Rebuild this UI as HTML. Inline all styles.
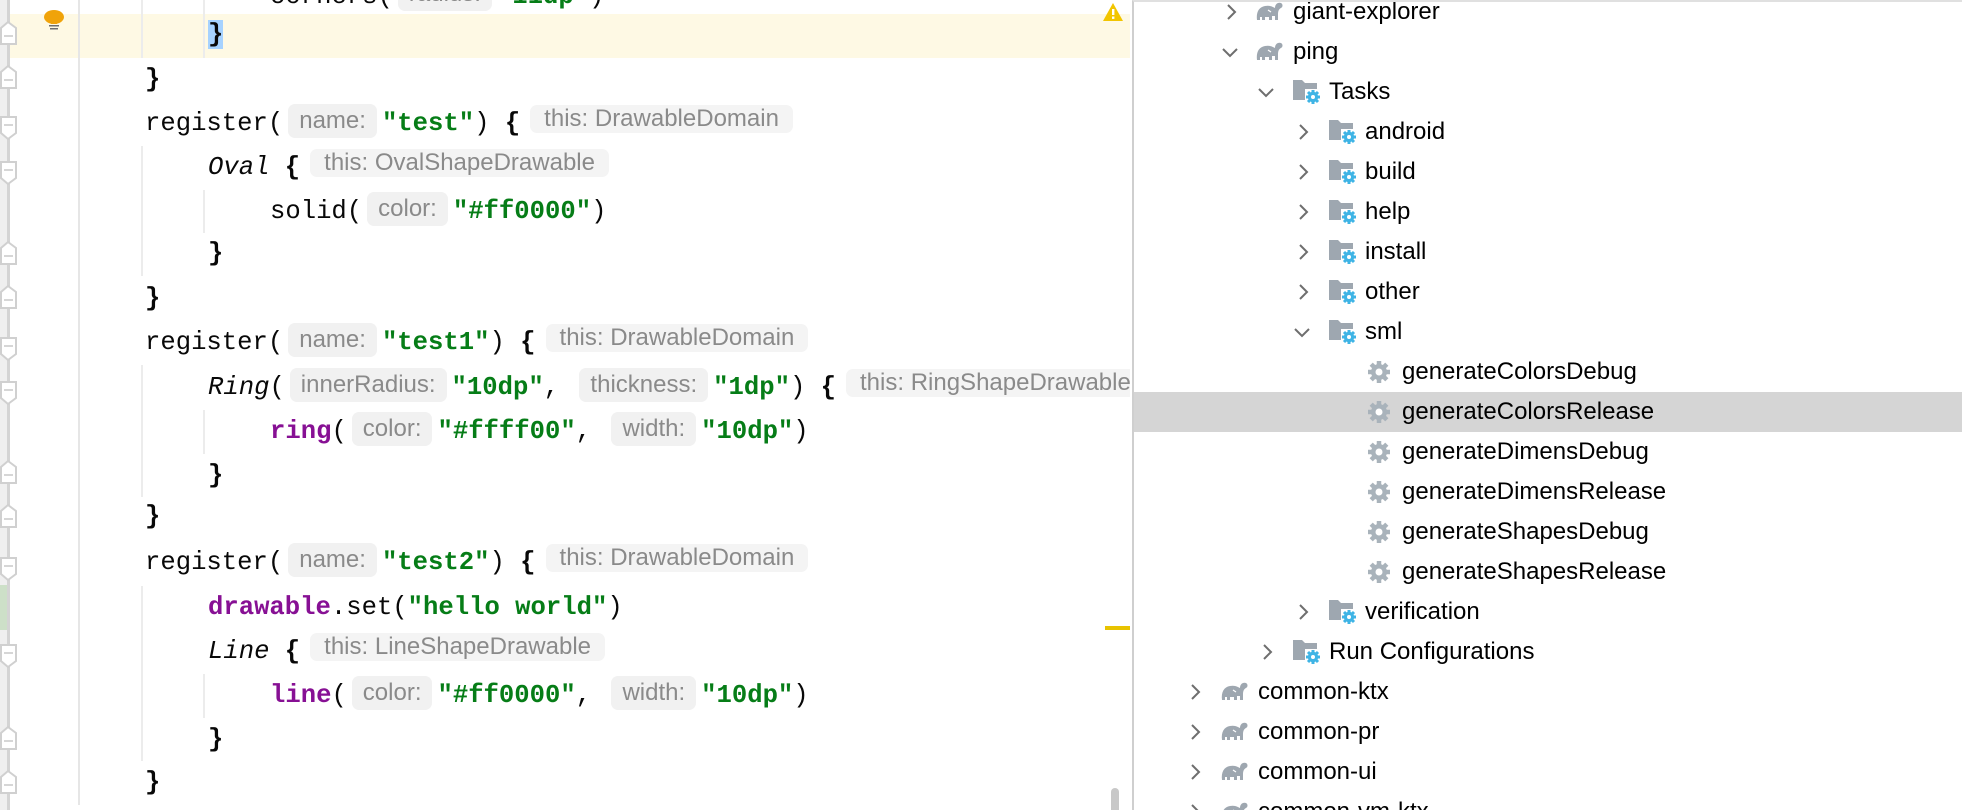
<!DOCTYPE html>
<html><head><meta charset="utf-8"><style>
*{margin:0;padding:0;box-sizing:border-box}
body{width:1962px;height:810px;overflow:hidden;background:#fff;position:relative;font-family:"Liberation Sans",sans-serif}
#ed{position:absolute;left:0;top:0;width:1130px;height:810px;overflow:hidden;background:#fff}
.ln{position:absolute;height:44px;line-height:44px;font-family:"Liberation Mono",monospace;font-size:25.6px;color:#080808;white-space:pre}
.s{color:#067d17;font-weight:bold}
.k{color:#871094;font-weight:bold}
.i{font-style:italic}
.b{font-weight:bold}
.h{display:inline-block;font-family:"Liberation Sans",sans-serif;font-size:24px;color:#8a8a8a;background:#f1f1f1;border-radius:7px;padding:0 11px;line-height:34px;margin:0 5px;vertical-align:2px}
.t{display:inline-block;font-family:"Liberation Sans",sans-serif;font-size:24px;color:#8a8a8a;background:#f4f4f4;border-radius:7px;padding:0 14px;line-height:28px;margin:0 10px;vertical-align:4px}
.ig{position:absolute;width:2px;background:#ececec}
#tree{position:absolute;left:1132px;top:0;width:830px;height:810px;border-left:2px solid #cfcfcf;border-top:2px solid #e0e0e0;background:#fff;overflow:hidden}
.r{position:absolute;left:0;width:830px;height:40px}
.r span{position:absolute;top:0;line-height:40px;font-size:24px;color:#000;white-space:nowrap}
.r svg{position:absolute}
</style></head><body>
<div id="ed">
<div style="position:absolute;left:0;top:14px;width:1130px;height:44px;background:#fef9e4"></div>
<div style="position:absolute;left:0;top:0;width:8px;height:810px;background:#efefef"></div>
<div style="position:absolute;left:0;top:585px;width:8px;height:45px;background:#cde0c8"></div>
<div style="position:absolute;left:7px;top:0;width:3px;height:810px;background:#d4d4d4"></div>
<div style="position:absolute;left:78px;top:0;width:2px;height:805px;background:#e6e6e6"></div>
<svg style="position:absolute;left:43px;top:10px" width="22" height="20" viewBox="0 0 22 20"><ellipse cx="11" cy="7" rx="10" ry="7" fill="#f0a30a"/><path d="M5 10 Q8 13 8 14 H14 Q14 13 17 10Z" fill="#f0a30a"/><rect x="6" y="15" width="10" height="1.5" fill="#6e6e6e"/><rect x="7" y="18" width="8" height="1.5" fill="#6e6e6e"/></svg>
<svg style="position:absolute;left:0;top:0" width="20" height="810">
<g fill="#fff" stroke="#d0d0d0" stroke-width="2">
<path d="M1 28 L8 22 L16 28 V44 H1Z"/><path d="M1 72 L8 66 L16 72 V88 H1Z"/>
<path d="M1 117 H16 V133 L8 139 L1 133Z"/><path d="M1 162 H16 V178 L8 184 L1 178Z"/>
<path d="M1 248 L8 242 L16 248 V264 H1Z"/><path d="M1 292 L8 286 L16 292 V308 H1Z"/>
<path d="M1 338 H16 V354 L8 360 L1 354Z"/><path d="M1 382 H16 V398 L8 404 L1 398Z"/>
<path d="M1 467 L8 461 L16 467 V483 H1Z"/><path d="M1 511 L8 505 L16 511 V527 H1Z"/>
<path d="M1 558 H16 V574 L8 580 L1 574Z"/><path d="M1 645 H16 V661 L8 667 L1 661Z"/>
<path d="M1 733 L8 727 L16 733 V749 H1Z"/><path d="M1 777 L8 771 L16 777 V793 H1Z"/>
</g>
<g stroke="#c8c8c8" stroke-width="1.5">
<path d="M4 36H13M4 80H13M4 125H13M4 170H13M4 256H13M4 300H13M4 346H13M4 390H13M4 475H13M4 519H13M4 566H13M4 653H13M4 741H13M4 785H13"/>
</g></svg>
<div class="ig" style="left:141px;top:0;height:58px"></div>
<div class="ig" style="left:203px;top:0;height:58px"></div>
<div class="ig" style="left:141px;top:146px;height:130px"></div>
<div class="ig" style="left:203px;top:190px;height:43px"></div>
<div class="ig" style="left:141px;top:365px;height:132px"></div>
<div class="ig" style="left:203px;top:410px;height:44px"></div>
<div class="ig" style="left:141px;top:586px;height:175px"></div>
<div class="ig" style="left:203px;top:674px;height:44px"></div>

<div class="ln" style="left:270px;top:-25px">corners(<span class="h">radius:</span><span class="s">"11dp"</span>)</div>
<div class="ln" style="left:208px;top:13px"><span style="background:#a6d2ff" class="b">}</span></div>
<div class="ln" style="left:145px;top:58px"><span class="b">}</span></div>
<div class="ln" style="left:145px;top:102px">register(<span class="h">name:</span><span class="s">"test"</span>) <span class="b">{</span><span class="t">this: DrawableDomain</span></div>
<div class="ln" style="left:208px;top:146px"><span class="i">Oval</span> <span class="b">{</span><span class="t">this: OvalShapeDrawable</span></div>
<div class="ln" style="left:270px;top:190px">solid(<span class="h">color:</span><span class="s">"#ff0000"</span>)</div>
<div class="ln" style="left:208px;top:232px"><span class="b">}</span></div>
<div class="ln" style="left:145px;top:277px"><span class="b">}</span></div>
<div class="ln" style="left:145px;top:321px">register(<span class="h">name:</span><span class="s">"test1"</span>) <span class="b">{</span><span class="t">this: DrawableDomain</span></div>
<div class="ln" style="left:208px;top:366px"><span class="i">Ring</span>(<span class="h">innerRadius:</span><span class="s">"10dp"</span>, <span class="h">thickness:</span><span class="s">"1dp"</span>) <span class="b">{</span><span class="t">this: RingShapeDrawable</span></div>
<div class="ln" style="left:270px;top:410px"><span class="k">ring</span>(<span class="h">color:</span><span class="s">"#ffff00"</span>, <span class="h">width:</span><span class="s">"10dp"</span>)</div>
<div class="ln" style="left:208px;top:454px"><span class="b">}</span></div>
<div class="ln" style="left:145px;top:495px"><span class="b">}</span></div>
<div class="ln" style="left:145px;top:541px">register(<span class="h">name:</span><span class="s">"test2"</span>) <span class="b">{</span><span class="t">this: DrawableDomain</span></div>
<div class="ln" style="left:208px;top:586px"><span class="k">drawable</span>.set(<span class="s">"hello world"</span>)</div>
<div class="ln" style="left:208px;top:630px"><span class="i">Line</span> <span class="b">{</span><span class="t">this: LineShapeDrawable</span></div>
<div class="ln" style="left:270px;top:674px"><span class="k">line</span>(<span class="h">color:</span><span class="s">"#ff0000"</span>, <span class="h">width:</span><span class="s">"10dp"</span>)</div>
<div class="ln" style="left:208px;top:718px"><span class="b">}</span></div>
<div class="ln" style="left:145px;top:761px"><span class="b">}</span></div>
<svg style="position:absolute;left:1102px;top:2px" width="22" height="20" viewBox="0 0 22 20"><path d="M11 1 L21 19 H1Z" fill="#f2c500"/><rect x="10" y="7" width="2.4" height="6" fill="#fff"/><rect x="10" y="14.5" width="2.4" height="2.4" fill="#fff"/></svg>
<div style="position:absolute;left:1105px;top:626px;width:25px;height:4px;background:#e8c300"></div>
<div style="position:absolute;left:1111px;top:788px;width:8px;height:30px;border-radius:4px;background:#c8c8c8"></div>
</div>

<svg width="0" height="0" style="position:absolute">
<defs>
<g id="chr"><path d="M2 1 L9 8 L2 15" fill="none" stroke="#6e6e6e" stroke-width="2"/></g>
<g id="chd"><path d="M1 3 L8 10 L15 3" fill="none" stroke="#6e6e6e" stroke-width="2"/></g>
<g id="ele"><path d="M2 20 C1 12 4 7 10 6 C15 5 18 7 20 8 C20 4 23 2 26 3 C28 4 28 7 26 8 C24 9 23 11 23 14 V20 H20 V16 H17 V20 H14 V17 H10 V20 H7 V17 H5 V20Z" fill="#9ea7b0"/><path d="M13 10 L16 12" stroke="#fff" stroke-width="1.2"/></g>
<g id="gearb"><circle cx="7" cy="7" r="5.2" fill="#3fb4e5"/><g stroke="#3fb4e5" stroke-width="3"><path d="M7 0V14M0 7H14M2 2L12 12M12 2L2 12"/></g><circle cx="7" cy="7" r="2" fill="#fff"/></g>
<g id="fold"><path d="M0 0 H9 L12 3 H24 V20 H0Z" fill="#9ea7b0"/><rect x="12" y="9" width="16" height="16" fill="#fff"/><use href="#gearb" x="13" y="10"/></g>
<g id="gear"><circle cx="11" cy="11" r="8" fill="#a9b3bb"/><g stroke="#a9b3bb" stroke-width="4.5"><path d="M11 0V22M0 11H22M3.2 3.2L18.8 18.8M18.8 3.2L3.2 18.8"/></g><circle cx="11" cy="11" r="3.5" fill="#fff"/></g>
</defs></svg>

<div id="tree">
<div class="r" style="top:-10px"><svg style="left:92px;top:12px" width="12" height="16"><use href="#chr"/></svg><svg style="left:121px;top:8px" width="30" height="22"><use href="#ele"/></svg><span style="left:159px">giant-explorer</span></div>
<div class="r" style="top:30px"><svg style="left:88px;top:14px" width="17" height="12"><use href="#chd"/></svg><svg style="left:121px;top:8px" width="30" height="22"><use href="#ele"/></svg><span style="left:159px">ping</span></div>
<div class="r" style="top:70px"><svg style="left:124px;top:14px" width="17" height="12"><use href="#chd"/></svg><svg style="left:159px;top:8px" width="30" height="28"><use href="#fold"/></svg><span style="left:195px">Tasks</span></div>
<div class="r" style="top:110px"><svg style="left:164px;top:12px" width="12" height="16"><use href="#chr"/></svg><svg style="left:195px;top:8px" width="30" height="28"><use href="#fold"/></svg><span style="left:231px">android</span></div>
<div class="r" style="top:150px"><svg style="left:164px;top:12px" width="12" height="16"><use href="#chr"/></svg><svg style="left:195px;top:8px" width="30" height="28"><use href="#fold"/></svg><span style="left:231px">build</span></div>
<div class="r" style="top:190px"><svg style="left:164px;top:12px" width="12" height="16"><use href="#chr"/></svg><svg style="left:195px;top:8px" width="30" height="28"><use href="#fold"/></svg><span style="left:231px">help</span></div>
<div class="r" style="top:230px"><svg style="left:164px;top:12px" width="12" height="16"><use href="#chr"/></svg><svg style="left:195px;top:8px" width="30" height="28"><use href="#fold"/></svg><span style="left:231px">install</span></div>
<div class="r" style="top:270px"><svg style="left:164px;top:12px" width="12" height="16"><use href="#chr"/></svg><svg style="left:195px;top:8px" width="30" height="28"><use href="#fold"/></svg><span style="left:231px">other</span></div>
<div class="r" style="top:310px"><svg style="left:160px;top:14px" width="17" height="12"><use href="#chd"/></svg><svg style="left:195px;top:8px" width="30" height="28"><use href="#fold"/></svg><span style="left:231px">sml</span></div>
<div class="r" style="top:350px"><svg style="left:234px;top:9px" width="22" height="22"><use href="#gear"/></svg><span style="left:268px">generateColorsDebug</span></div>
<div class="r" style="top:390px;background:#d5d5d5"><svg style="left:234px;top:9px" width="22" height="22"><use href="#gear"/></svg><span style="left:268px">generateColorsRelease</span></div>
<div class="r" style="top:430px"><svg style="left:234px;top:9px" width="22" height="22"><use href="#gear"/></svg><span style="left:268px">generateDimensDebug</span></div>
<div class="r" style="top:470px"><svg style="left:234px;top:9px" width="22" height="22"><use href="#gear"/></svg><span style="left:268px">generateDimensRelease</span></div>
<div class="r" style="top:510px"><svg style="left:234px;top:9px" width="22" height="22"><use href="#gear"/></svg><span style="left:268px">generateShapesDebug</span></div>
<div class="r" style="top:550px"><svg style="left:234px;top:9px" width="22" height="22"><use href="#gear"/></svg><span style="left:268px">generateShapesRelease</span></div>
<div class="r" style="top:590px"><svg style="left:164px;top:12px" width="12" height="16"><use href="#chr"/></svg><svg style="left:195px;top:8px" width="30" height="28"><use href="#fold"/></svg><span style="left:231px">verification</span></div>
<div class="r" style="top:630px"><svg style="left:128px;top:12px" width="12" height="16"><use href="#chr"/></svg><svg style="left:159px;top:8px" width="30" height="28"><use href="#fold"/></svg><span style="left:195px">Run Configurations</span></div>
<div class="r" style="top:670px"><svg style="left:56px;top:12px" width="12" height="16"><use href="#chr"/></svg><svg style="left:86px;top:8px" width="30" height="22"><use href="#ele"/></svg><span style="left:124px">common-ktx</span></div>
<div class="r" style="top:710px"><svg style="left:56px;top:12px" width="12" height="16"><use href="#chr"/></svg><svg style="left:86px;top:8px" width="30" height="22"><use href="#ele"/></svg><span style="left:124px">common-pr</span></div>
<div class="r" style="top:750px"><svg style="left:56px;top:12px" width="12" height="16"><use href="#chr"/></svg><svg style="left:86px;top:8px" width="30" height="22"><use href="#ele"/></svg><span style="left:124px">common-ui</span></div>
<div class="r" style="top:790px"><svg style="left:56px;top:12px" width="12" height="16"><use href="#chr"/></svg><svg style="left:86px;top:8px" width="30" height="22"><use href="#ele"/></svg><span style="left:124px">common-vm-ktx</span></div>
</div>
</body></html>
